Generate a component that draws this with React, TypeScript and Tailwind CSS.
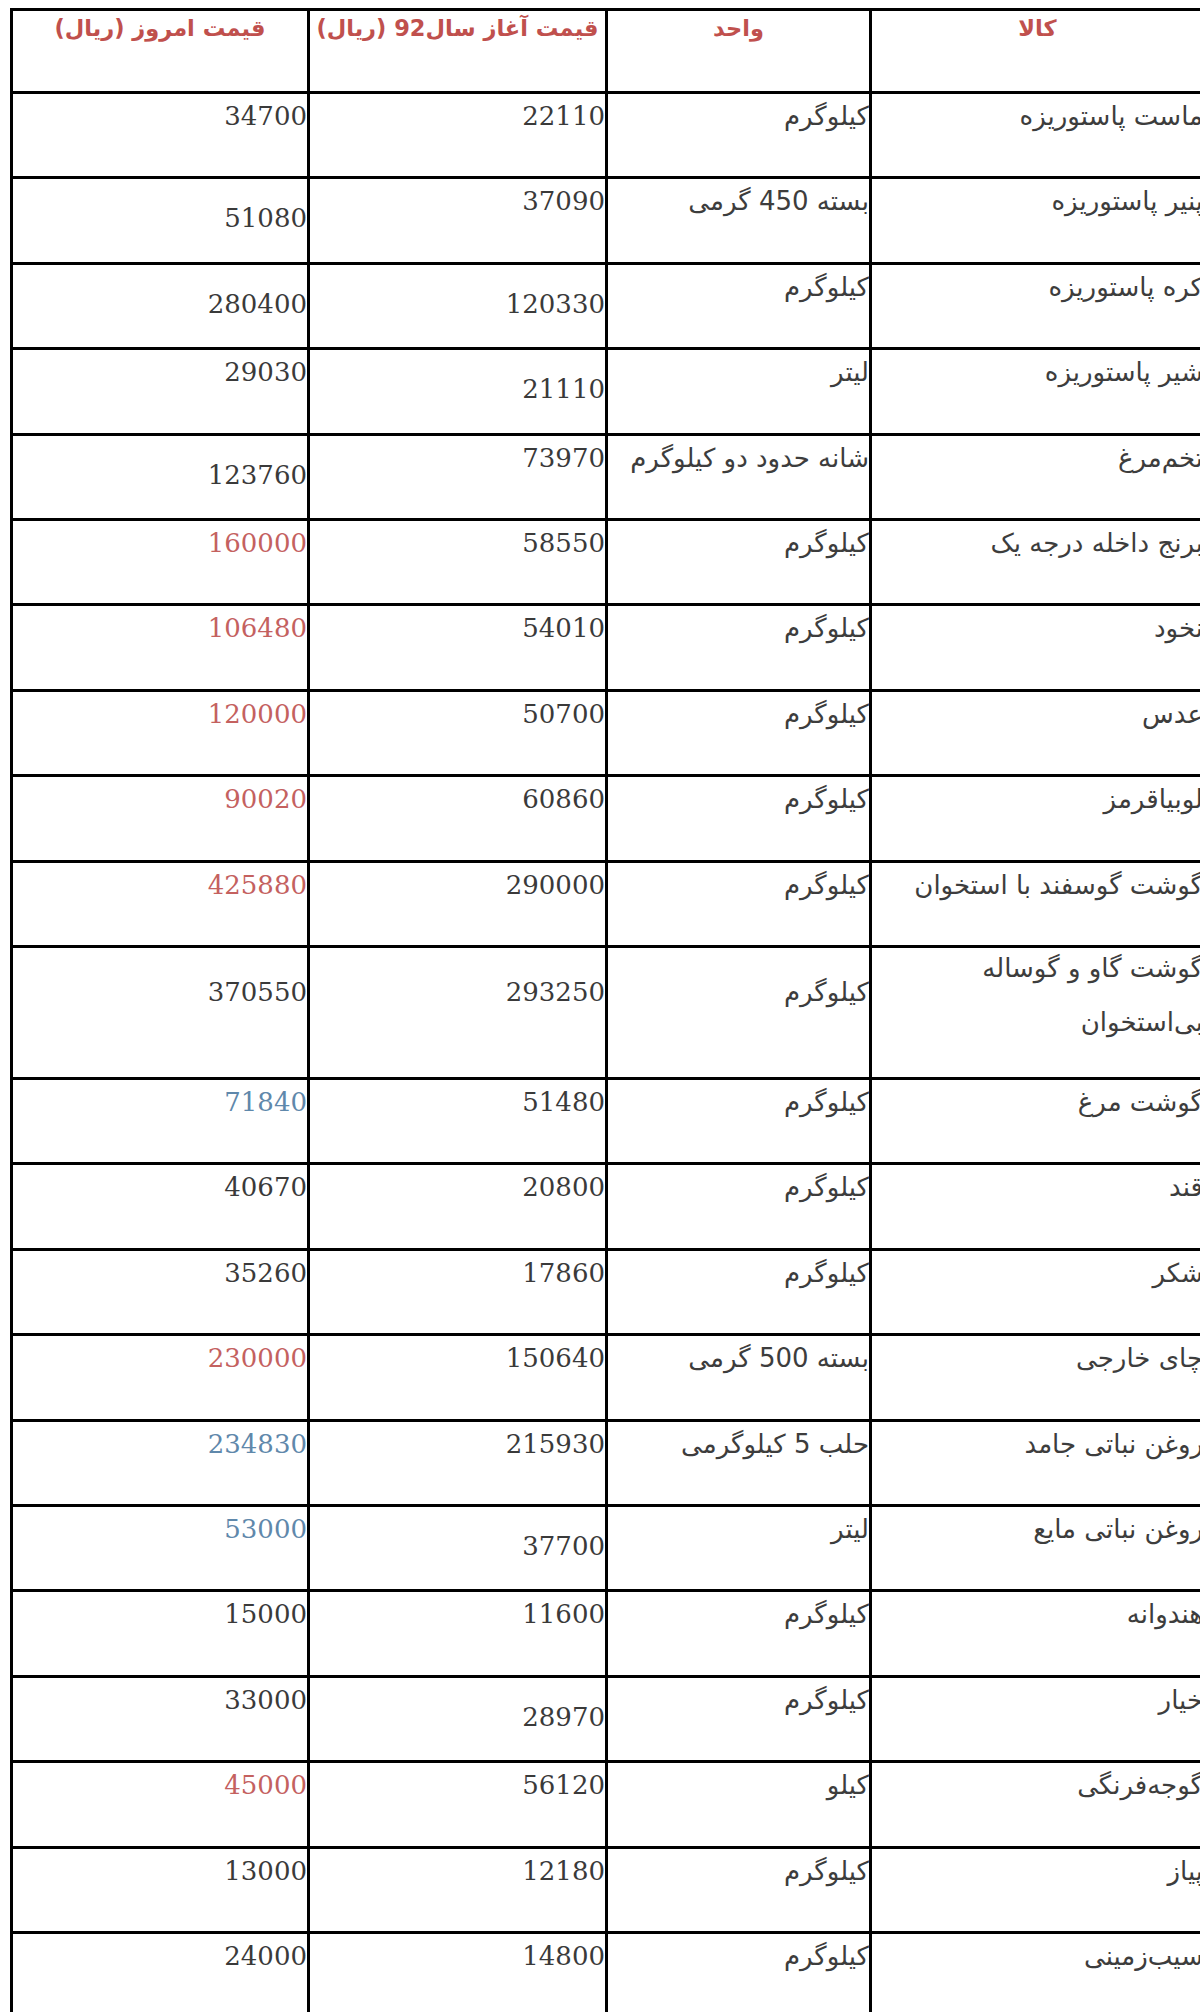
import React from 'react';

type Tone = 'dark' | 'red' | 'blue';
type Pos = 't' | 'm' | 'c';

type Item = {
  name: string;
  unit: string;
  start: string;
  today: string;
  tone?: Tone;
  pos?: [Pos, Pos, Pos, Pos]; // today, start, unit, name
  tall?: boolean;
};

const ITEMS: Item[] = [
  { name: 'ماست پاستوریزه', unit: 'کیلوگرم', start: '22110', today: '34700' },
  { name: 'پنیر پاستوریزه', unit: 'بسته 450 گرمی', start: '37090', today: '51080', pos: ['m', 't', 't', 't'] },
  { name: 'کره پاستوریزه', unit: 'کیلوگرم', start: '120330', today: '280400', pos: ['m', 'm', 't', 't'] },
  { name: 'شیر پاستوریزه', unit: 'لیتر', start: '21110', today: '29030', pos: ['t', 'm', 't', 't'] },
  { name: 'تخم‌مرغ', unit: 'شانه حدود دو کیلوگرم', start: '73970', today: '123760', pos: ['m', 't', 't', 't'] },
  { name: 'برنج داخله درجه یک', unit: 'کیلوگرم', start: '58550', today: '160000', tone: 'red' },
  { name: 'نخود', unit: 'کیلوگرم', start: '54010', today: '106480', tone: 'red' },
  { name: 'عدس', unit: 'کیلوگرم', start: '50700', today: '120000', tone: 'red' },
  { name: 'لوبیاقرمز', unit: 'کیلوگرم', start: '60860', today: '90020', tone: 'red' },
  { name: 'گوشت گوسفند با استخوان', unit: 'کیلوگرم', start: '290000', today: '425880', tone: 'red' },
  { name: 'گوشت گاو و گوساله بی‌استخوان', unit: 'کیلوگرم', start: '293250', today: '370550', tall: true },
  { name: 'گوشت مرغ', unit: 'کیلوگرم', start: '51480', today: '71840', tone: 'blue' },
  { name: 'قند', unit: 'کیلوگرم', start: '20800', today: '40670' },
  { name: 'شکر', unit: 'کیلوگرم', start: '17860', today: '35260' },
  { name: 'چای خارجی', unit: 'بسته 500 گرمی', start: '150640', today: '230000', tone: 'red' },
  { name: 'روغن نباتی جامد', unit: 'حلب 5 کیلوگرمی', start: '215930', today: '234830', tone: 'blue' },
  { name: 'روغن نباتی مایع', unit: 'لیتر', start: '37700', today: '53000', tone: 'blue', pos: ['t', 'm', 't', 't'] },
  { name: 'هندوانه', unit: 'کیلوگرم', start: '11600', today: '15000' },
  { name: 'خیار', unit: 'کیلوگرم', start: '28970', today: '33000', pos: ['t', 'm', 't', 't'] },
  { name: 'گوجه‌فرنگی', unit: 'کیلو', start: '56120', today: '45000', tone: 'red' },
  { name: 'پیاز', unit: 'کیلوگرم', start: '12180', today: '13000' },
  { name: 'سیب‌زمینی', unit: 'کیلوگرم', start: '14800', today: '24000' },
];

const TONE: Record<Tone, string> = {
  dark: 'text-[#3a3a3a]',
  red: 'text-[#c4615f]',
  blue: 'text-[#5f88ab]',
};

const PAD: Record<Pos, string> = {
  t: 'pt-[7px]',
  m: 'pt-[24px]',
  c: 'pt-[29px]',
};

const HEADERS = ['کالا', 'واحد', 'قیمت آغاز سال92 (ریال)', 'قیمت امروز (ریال)'];

const FA = "font-['DejaVu_Sans',sans-serif]";
const NUM = "font-['DejaVu_Serif',serif]";

export default function App() {
  return (
    <div className="h-[2012px] w-[1200px] overflow-hidden bg-white pl-[10px] pt-[8px]">
      <div
        dir="rtl"
        className="grid w-[1196px] grid-cols-[331px_261px_295px_294px] gap-[3px] border-[3px] border-black bg-black"
      >
        {HEADERS.map((h) => (
          <div
            key={h}
            className={`h-[80px] bg-white pt-[2px] text-center text-[22.5px] font-bold leading-[30px] text-[#c0504d] ${FA}`}
          >
            {h}
          </div>
        ))}

        {ITEMS.map((it) => (
          <Row key={it.name} item={it} />
        ))}
      </div>
    </div>
  );
}

function Row({ item }: { item: Item }) {
  const pos = item.pos ?? ['t', 't', 't', 't'];
  const h = item.tall ? 'h-[129.2px]' : 'h-[82.4px]';
  const single = (p: Pos) => (item.tall ? PAD.c : PAD[p]);
  const tone = TONE[item.tone ?? 'dark'];

  return (
    <>
      <div
        className={`${h} ${item.tall ? 'pt-0' : PAD[pos[3]]} bg-white text-right text-[26px] leading-[30px] text-[#3d3d3d] ${FA}`}
      >
        {item.tall ? (
          <div className="-mt-[7px] leading-[54px]">
            گوشت گاو و گوساله
            <br />
            بی‌استخوان
          </div>
        ) : (
          item.name
        )}
      </div>
      <div className={`${h} ${single(pos[2])} bg-white text-right text-[26px] leading-[30px] text-[#3d3d3d] ${FA}`}>
        {item.unit}
      </div>
      <div className={`${h} ${single(pos[1])} bg-white text-right text-[26px] leading-[30px] text-[#3a3a3a] ${NUM}`}>
        {item.start}
      </div>
      <div className={`${h} ${single(pos[0])} bg-white text-right text-[26px] leading-[30px] ${tone} ${NUM}`}>
        {item.today}
      </div>
    </>
  );
}
